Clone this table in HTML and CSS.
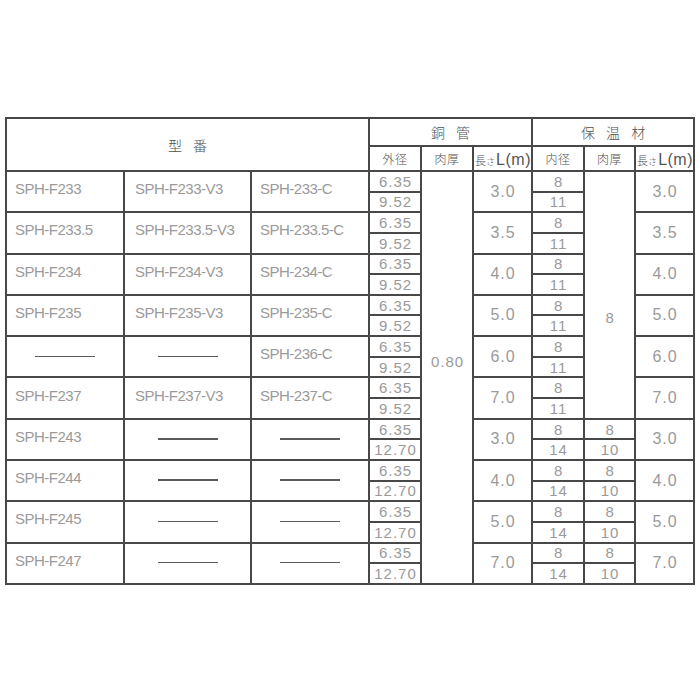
FILE: index.html
```html
<!DOCTYPE html>
<html lang="ja">
<head>
<meta charset="utf-8">
<link rel="stylesheet" href="styles.css">
</head>
<body>
<div class="page">
<table class="spec">
<colgroup>
<col class="c-m1"><col class="c-m2"><col class="c-m3">
<col class="c-od"><col class="c-th"><col class="c-len">
<col class="c-id"><col class="c-ith"><col class="c-len2">
</colgroup>
<thead>
<tr class="h1">
<th rowspan="2" colspan="3" class="hd big">型 番</th>
<th colspan="3" class="hd big">銅 管</th>
<th colspan="3" class="hd big">保 温 材</th>
</tr>
<tr class="h2">
<th class="hd sm">外径</th>
<th class="hd sm">肉厚</th>
<th class="hd len"><span class="k1">長</span><span class="k2">さ</span><span class="lm">L(m)</span></th>
<th class="hd sm">内径</th>
<th class="hd sm">肉厚</th>
<th class="hd len"><span class="k1">長</span><span class="k2">さ</span><span class="lm">L(m)</span></th>
</tr>
</thead>
<tbody>
<tr class="s">
<td rowspan="2" class="m">SPH-F233</td>
<td rowspan="2" class="m m2">SPH-F233-V3</td>
<td rowspan="2" class="m">SPH-233-C</td>
<td class="n">6.35</td>
<td rowspan="20" class="n wall">0.80</td>
<td rowspan="2" class="n l">3.0</td>
<td class="n">8</td>
<td rowspan="12" class="n ins">8</td>
<td rowspan="2" class="n l">3.0</td>
</tr>
<tr class="s"><td class="n">9.52</td><td class="n">11</td></tr>

<tr class="s">
<td rowspan="2" class="m">SPH-F233.5</td>
<td rowspan="2" class="m m2">SPH-F233.5-V3</td>
<td rowspan="2" class="m">SPH-233.5-C</td>
<td class="n">6.35</td>
<td rowspan="2" class="n l">3.5</td>
<td class="n">8</td>
<td rowspan="2" class="n l">3.5</td>
</tr>
<tr class="s"><td class="n">9.52</td><td class="n">11</td></tr>

<tr class="s">
<td rowspan="2" class="m">SPH-F234</td>
<td rowspan="2" class="m m2">SPH-F234-V3</td>
<td rowspan="2" class="m">SPH-234-C</td>
<td class="n">6.35</td>
<td rowspan="2" class="n l">4.0</td>
<td class="n">8</td>
<td rowspan="2" class="n l">4.0</td>
</tr>
<tr class="s"><td class="n">9.52</td><td class="n">11</td></tr>

<tr class="s">
<td rowspan="2" class="m">SPH-F235</td>
<td rowspan="2" class="m m2">SPH-F235-V3</td>
<td rowspan="2" class="m">SPH-235-C</td>
<td class="n">6.35</td>
<td rowspan="2" class="n l">5.0</td>
<td class="n">8</td>
<td rowspan="2" class="n l">5.0</td>
</tr>
<tr class="s"><td class="n">9.52</td><td class="n">11</td></tr>

<tr class="s">
<td rowspan="2" class="m c"><span class="dash"></span></td>
<td rowspan="2" class="m c"><span class="dash"></span></td>
<td rowspan="2" class="m">SPH-236-C</td>
<td class="n">6.35</td>
<td rowspan="2" class="n l">6.0</td>
<td class="n">8</td>
<td rowspan="2" class="n l">6.0</td>
</tr>
<tr class="s"><td class="n">9.52</td><td class="n">11</td></tr>

<tr class="s">
<td rowspan="2" class="m">SPH-F237</td>
<td rowspan="2" class="m m2">SPH-F237-V3</td>
<td rowspan="2" class="m">SPH-237-C</td>
<td class="n">6.35</td>
<td rowspan="2" class="n l">7.0</td>
<td class="n">8</td>
<td rowspan="2" class="n l">7.0</td>
</tr>
<tr class="s"><td class="n">9.52</td><td class="n">11</td></tr>

<tr class="s">
<td rowspan="2" class="m">SPH-F243</td>
<td rowspan="2" class="m c"><span class="dash"></span></td>
<td rowspan="2" class="m c"><span class="dash"></span></td>
<td class="n">6.35</td>
<td rowspan="2" class="n l">3.0</td>
<td class="n">8</td>
<td class="n">8</td>
<td rowspan="2" class="n l">3.0</td>
</tr>
<tr class="s"><td class="n">12.70</td><td class="n">14</td><td class="n">10</td></tr>

<tr class="s">
<td rowspan="2" class="m">SPH-F244</td>
<td rowspan="2" class="m c"><span class="dash"></span></td>
<td rowspan="2" class="m c"><span class="dash"></span></td>
<td class="n">6.35</td>
<td rowspan="2" class="n l">4.0</td>
<td class="n">8</td>
<td class="n">8</td>
<td rowspan="2" class="n l">4.0</td>
</tr>
<tr class="s"><td class="n">12.70</td><td class="n">14</td><td class="n">10</td></tr>

<tr class="s">
<td rowspan="2" class="m">SPH-F245</td>
<td rowspan="2" class="m c"><span class="dash"></span></td>
<td rowspan="2" class="m c"><span class="dash"></span></td>
<td class="n">6.35</td>
<td rowspan="2" class="n l">5.0</td>
<td class="n">8</td>
<td class="n">8</td>
<td rowspan="2" class="n l">5.0</td>
</tr>
<tr class="s"><td class="n">12.70</td><td class="n">14</td><td class="n">10</td></tr>

<tr class="s">
<td rowspan="2" class="m">SPH-F247</td>
<td rowspan="2" class="m c"><span class="dash"></span></td>
<td rowspan="2" class="m c"><span class="dash"></span></td>
<td class="n">6.35</td>
<td rowspan="2" class="n l">7.0</td>
<td class="n">8</td>
<td class="n">8</td>
<td rowspan="2" class="n l">7.0</td>
</tr>
<tr class="s"><td class="n">12.70</td><td class="n">14</td><td class="n">10</td></tr>
</tbody>
</table>
</div>
</body>
</html>
```

FILE: styles.css
```css
html, body {
  margin: 0;
  padding: 0;
  background: #ffffff;
}

.page {
  padding: 117px 0 0 5px;
}

.spec {
  border-collapse: collapse;
  table-layout: fixed;
  width: 688px;
  font-family: "Liberation Sans", Arial, sans-serif;
  color: #9a9a9a;
}

.c-m1 { width: 118px; }
.c-m2 { width: 127px; }
.c-m3 { width: 118px; }
.c-od { width: 52px; }
.c-th { width: 52px; }
.c-len { width: 59px; }
.c-id { width: 52px; }
.c-ith { width: 51px; }
.c-len2 { width: 59px; }

.spec th,
.spec td {
  border: 2px solid #484848;
  padding: 0;
  overflow: hidden;
  white-space: nowrap;
  line-height: 1;
}

.h1 { height: 28px; }
.h2 { height: 25px; }
.s { height: 20.65px; }

.spec .hd {
  font-family: "Noto Sans CJK JP", "Noto Sans CJK SC", sans-serif;
  font-weight: 300;
  color: #505050;
  text-align: center;
  vertical-align: middle;
}

.spec .big {
  font-size: 14px;
  letter-spacing: 4px;
  padding-left: 4px;
}

.spec .sm {
  font-size: 12px;
  letter-spacing: 0.5px;
}

.spec .len {
  text-align: center;
  padding-left: 1px;
}

.k1 {
  font-size: 11px;
}

.k2 {
  font-size: 9px;
  margin-right: 1px;
}

.lm {
  font-family: "Liberation Sans", Arial, sans-serif;
  font-weight: 400;
  font-size: 16px;
  letter-spacing: 0.5px;
  color: #555555;
}

.spec .m {
  font-size: 15px;
  letter-spacing: -0.5px;
  text-align: left;
  vertical-align: middle;
  padding: 0 0 6px 8px;
}

.spec .m2 {
  padding-left: 10px;
}

.spec .m.c {
  text-align: center;
  padding: 0 0 4px 0;
}

.dash {
  display: inline-block;
  width: 60px;
  height: 1.5px;
  background: #5a5a5a;
  vertical-align: middle;
}

.spec .n {
  font-size: 15px;
  letter-spacing: 1px;
  text-indent: 1px;
  text-align: center;
  vertical-align: middle;
}

.spec .l {
  font-size: 16px;
}

.spec .wall {
  padding-bottom: 31px;
}

.spec .ins {
  padding-top: 46px;
}
```
